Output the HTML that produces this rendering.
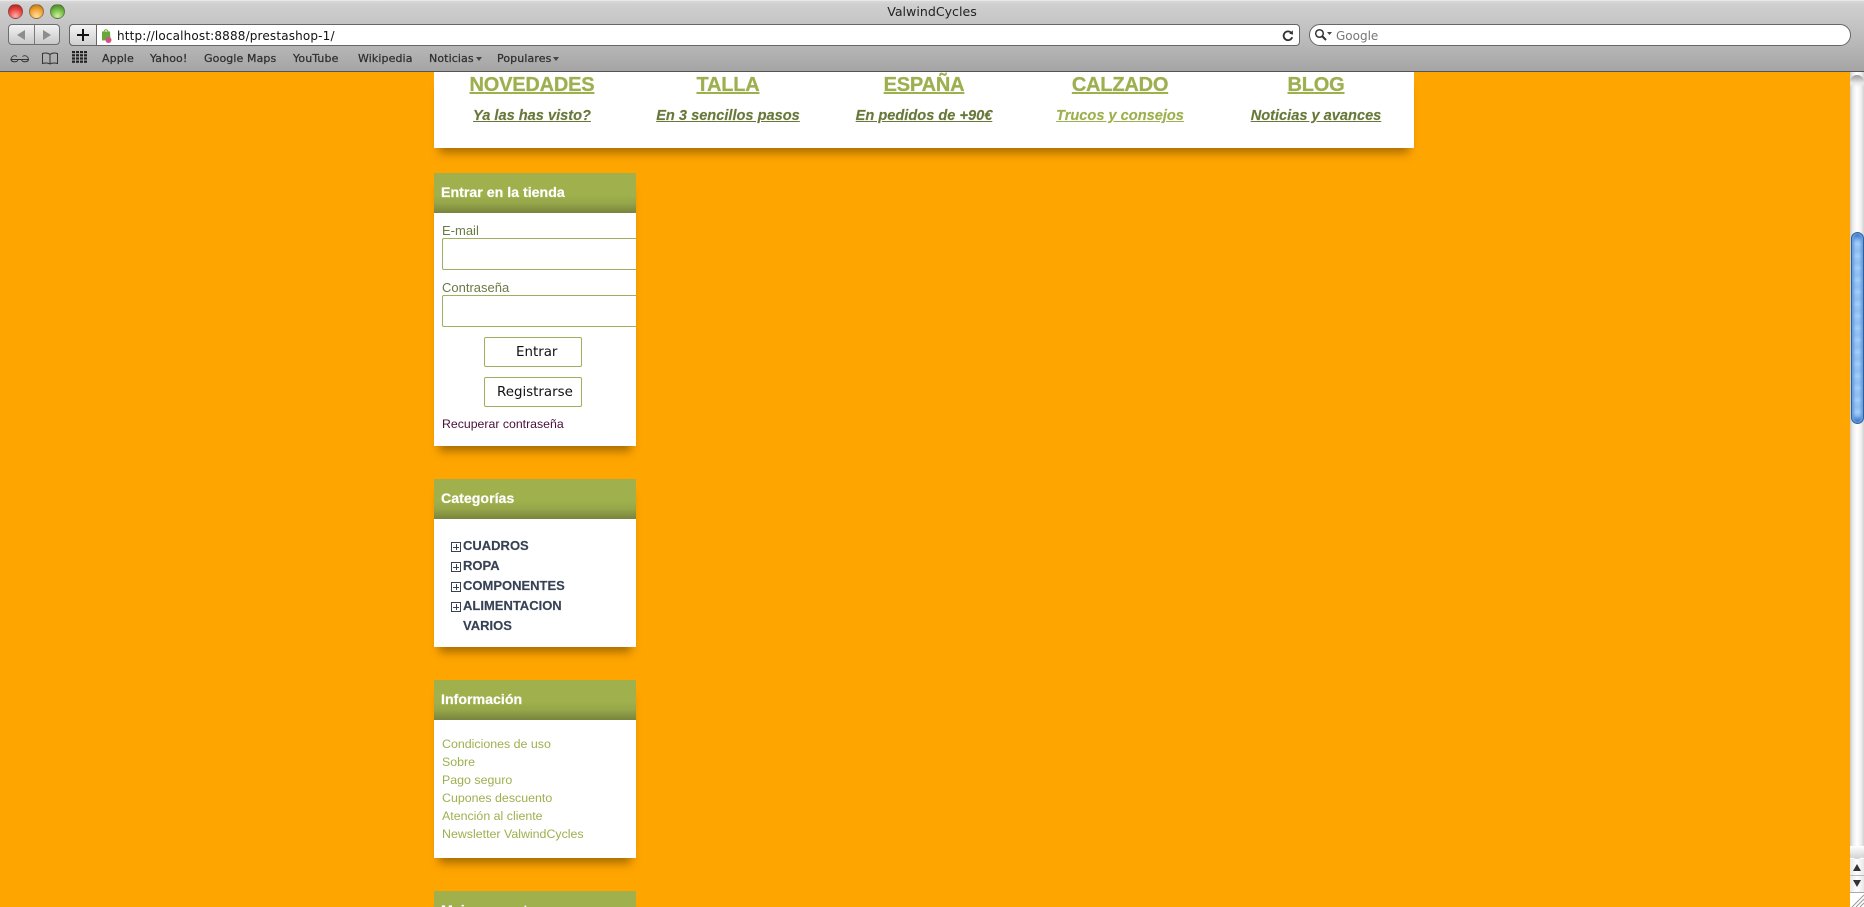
<!DOCTYPE html>
<html lang="es">
<head>
<meta charset="utf-8">
<title>ValwindCycles</title>
<style>
html,body{margin:0;padding:0;width:1864px;height:907px;overflow:hidden;background:#ffa500;font-family:"Liberation Sans",sans-serif}
*{box-sizing:border-box}
#page{position:absolute;left:0;top:0;width:1864px;height:907px;overflow:hidden}
#page *{position:absolute}
#chrome{left:0;top:0;width:1864px;height:72px;background:linear-gradient(#d8d8d8 0,#cfcfcf 4px,#bdbdbd 36px,#a4a4a4 71px);border-bottom:1px solid #555;border-top:1px solid #e8e8e8;z-index:5}
.ui{font-family:"DejaVu Sans",sans-serif;white-space:nowrap}
.light{width:15px;height:15px;border-radius:50%;border:1px solid rgba(80,80,80,.55)}
.bm{top:51px;font-size:11px;line-height:14px;color:#2f2f2f;font-weight:400;-webkit-text-stroke:.25px #2f2f2f;letter-spacing:.1px}
.tri{width:0;height:0;border-left:3px solid transparent;border-right:3px solid transparent;border-top:4px solid #444}
#head{left:434px;top:72px;width:980px;height:76px;background:#fff;box-shadow:0 10px 9px -5px rgba(0,0,0,.34)}
.col{width:196px;text-align:center;white-space:nowrap;text-decoration:underline}
.t{top:1px;font-size:20px;font-weight:700;line-height:24px;color:#9db04f;letter-spacing:-.2px;-webkit-text-stroke:.3px #9db04f}
.s{top:34px;font-size:14.6px;font-weight:700;font-style:italic;line-height:20px;color:#67783a;-webkit-text-stroke:.15px currentColor}
.box{left:434px;width:202px;background:#fff;box-shadow:0 10px 9px -5px rgba(0,0,0,.36)}
.hd{left:0;top:0;width:202px;height:40px;background:linear-gradient(#9fb04d 0,#9fb04d 22px,#96a649 30px,#77843c 40px);color:#fff;font-size:14.2px;font-weight:700;line-height:20px;padding:0;-webkit-text-stroke:.2px #fff}
.hd span{left:7px;top:10px;white-space:nowrap}
.lab{left:8px;font-size:13px;line-height:16px;color:#6a7a45;white-space:nowrap}
.inp{left:8px;width:194px;height:32px;background:#fff;border:1px solid #a0ae60;border-right:0;border-radius:2px 0 0 2px}
.btn{left:50px;width:98px;height:30px;background:#fff;border:1px solid #a0ae60;border-radius:2px;font-family:"DejaVu Sans",sans-serif;font-size:13.400px;line-height:28px;color:#111;white-space:nowrap}
.cat{left:29px;font-size:13px;font-weight:700;line-height:16px;color:#374254;white-space:nowrap;-webkit-text-stroke:.15px #374254}
.plus{left:17px;width:10px;height:10px;border:1px solid #374254;background:
 linear-gradient(#374254,#374254) center/6px 1px no-repeat,
 linear-gradient(#374254,#374254) center/1px 6px no-repeat,#fff}
.lnk{left:8px;font-size:12.4px;line-height:16px;color:#9db04f;white-space:nowrap}
#sb{left:1850px;top:72px;width:14px;height:835px;background:#fff;z-index:4}
</style>
</head>
<body>
<div id="page">

<div id="head">
  <a class="col t" style="left:0">NOVEDADES</a><a class="col s" style="left:0">Ya las has visto?</a>
  <a class="col t" style="left:196px">TALLA</a><a class="col s" style="left:196px">En 3 sencillos pasos</a>
  <a class="col t" style="left:392px">ESPAÑA</a><a class="col s" style="left:392px">En pedidos de +90€</a>
  <a class="col t" style="left:588px">CALZADO</a><a class="col s" style="left:588px;color:#9db04f">Trucos y consejos</a>
  <a class="col t" style="left:784px">BLOG</a><a class="col s" style="left:784px">Noticias y avances</a>
</div>

<div class="box" style="top:173px;height:273px">
  <div class="hd"><span>Entrar en la tienda</span></div>
  <div class="lab" style="top:50px">E-mail</div>
  <div class="inp" style="top:65px"></div>
  <div class="lab" style="top:107px">Contraseña</div>
  <div class="inp" style="top:122px"></div>
  <div class="btn" style="top:164px"><span style="left:31px;top:1px">Entrar</span></div>
  <div class="btn" style="top:204px"><span style="left:12px;top:1px">Registrarse</span></div>
  <div class="lab" style="top:243px;color:#4a0f3a;font-size:12.300px">Recuperar contraseña</div>
</div>

<div class="box" style="top:479px;height:168px">
  <div class="hd"><span>Categorías</span></div>
  <div class="plus" style="top:63px"></div><div class="cat" style="top:59px">CUADROS</div>
  <div class="plus" style="top:83px"></div><div class="cat" style="top:79px">ROPA</div>
  <div class="plus" style="top:103px"></div><div class="cat" style="top:99px">COMPONENTES</div>
  <div class="plus" style="top:123px"></div><div class="cat" style="top:119px">ALIMENTACION</div>
  <div class="cat" style="top:139px">VARIOS</div>
</div>

<div class="box" style="top:680px;height:178px">
  <div class="hd"><span>Información</span></div>
  <div class="lnk" style="top:56px">Condiciones de uso</div>
  <div class="lnk" style="top:74px">Sobre</div>
  <div class="lnk" style="top:92px">Pago seguro</div>
  <div class="lnk" style="top:110px">Cupones descuento</div>
  <div class="lnk" style="top:128px">Atención al cliente</div>
  <div class="lnk" style="top:146px">Newsletter ValwindCycles</div>
</div>

<div class="box" style="top:891px;height:16px;overflow:hidden">
  <div class="hd"><span>Mejores ventas</span></div>
</div>

<div id="chrome">
  <div class="ui" style="left:0;width:1864px;top:3px;text-align:center;font-size:12.600px;line-height:16px;color:#222">ValwindCycles</div>

  <div class="light" style="left:8px;top:3px;background:radial-gradient(circle at 50% 85%,#ffb0a8 0,#e8433e 55%,#a81818 100%)"></div>
  <div class="light" style="left:29px;top:3px;background:radial-gradient(circle at 50% 85%,#ffe0a0 0,#f0a030 55%,#b06c10 100%)"></div>
  <div class="light" style="left:50px;top:3px;background:radial-gradient(circle at 50% 85%,#d0f0a0 0,#70b840 55%,#3c7a1c 100%)"></div>

  <div style="left:8px;top:23px;width:52px;height:21px;border:1px solid #6e6e6e;border-radius:4px;background:linear-gradient(#f2f2f2,#c8c8c8)"></div>
  <div style="left:34px;top:24px;width:1px;height:19px;background:#7a7a7a"></div>
  <div style="left:17px;top:29px;width:0;height:0;border-top:5px solid transparent;border-bottom:5px solid transparent;border-right:8px solid #8d8d8d"></div>
  <div style="left:43px;top:29px;width:0;height:0;border-top:5px solid transparent;border-bottom:5px solid transparent;border-left:8px solid #8d8d8d"></div>

  <div style="left:69px;top:23px;width:1231px;height:22px;border:1px solid #666;border-radius:4px;background:#fff"></div>
  <div style="left:69px;top:23px;width:28px;height:22px;border:1px solid #666;border-radius:4px 0 0 4px;background:linear-gradient(#f4f4f4,#cfcfcf)"></div>
  <div style="left:77px;top:33px;width:12px;height:2px;background:#111"></div>
  <div style="left:82px;top:28px;width:2px;height:12px;background:#111"></div>

  <svg style="left:101px;top:27px" width="12" height="17" viewBox="0 0 12 17">
    <path d="M1 3.500 L9 3.500 L9.500 12 L1 12.500 Z" fill="#66a83a"/>
    <path d="M3 4 C3 1 7 1 7 4" fill="none" stroke="#66a83a" stroke-width="1"/>
    <circle cx="7.500" cy="12" r="3" fill="#d84d88"/>
  </svg>
  <div class="ui" style="left:117px;top:27px;font-size:12px;line-height:16px;color:#111;letter-spacing:.16px">http://localhost:8888/prestashop-1/</div>

  <svg style="left:1281px;top:27px" width="14" height="16" viewBox="0 0 14 16">
    <path d="M10.600 5.200 A4.400 4.400 0 1 0 11.200 9.200" fill="none" stroke="#333" stroke-width="1.800"/>
    <path d="M8.200 5.600 L12 6.600 L11.800 2.400 Z" fill="#333"/>
  </svg>

  <div style="left:1309px;top:23px;width:542px;height:22px;border:1px solid #666;border-radius:11px;background:#fff"></div>
  <svg style="left:1314px;top:27px" width="20" height="14" viewBox="0 0 20 14">
    <circle cx="5.500" cy="5.500" r="3.800" fill="none" stroke="#333" stroke-width="1.500"/>
    <path d="M8.500 8.500 L12 12" stroke="#333" stroke-width="2"/>
    <path d="M13 4 L18 4 L15.500 7 Z" fill="#444"/>
  </svg>
  <div class="ui" style="left:1336px;top:27px;font-size:12px;line-height:16px;color:#777">Google</div>

  <svg style="left:10px;top:52px" width="20" height="12" viewBox="0 0 20 12">
    <path d="M1 6.500 H8 C8 9.500 1.500 9.500 1 6.500 Z M11.500 6.500 H18.500 C18 9.500 11.500 9.500 11.500 6.500 Z M8 6.500 H11.500" fill="none" stroke="#333"/>
    <path d="M1 6 C2 2.500 5 2 7 3.500 M18.500 6 C17.500 2.500 14.500 2 12.500 3.500" fill="none" stroke="#333" stroke-width=".9"/>
  </svg>
  <svg style="left:41px;top:51px" width="18" height="13" viewBox="0 0 18 13">
    <path d="M9 2.500 C7 .8 4 .8 1.500 1.500 V11.500 C4 10.800 7 10.800 9 12 C11 10.800 14 10.800 16.500 11.500 V1.500 C14 .8 11 .8 9 2.500 Z M9 2.500 V12" fill="none" stroke="#333"/>
  </svg>
  <svg style="left:72px;top:50px" width="15" height="12" viewBox="0 0 15 12" fill="#222">
    <rect x="0" y="0" width="3" height="2.200"/><rect x="4" y="0" width="3" height="2.200"/><rect x="8" y="0" width="3" height="2.200"/><rect x="12" y="0" width="3" height="2.200"/>
    <rect x="0" y="3.200" width="3" height="2.200"/><rect x="4" y="3.200" width="3" height="2.200"/><rect x="8" y="3.200" width="3" height="2.200"/><rect x="12" y="3.200" width="3" height="2.200"/>
    <rect x="0" y="6.400" width="3" height="2.200"/><rect x="4" y="6.400" width="3" height="2.200"/><rect x="8" y="6.400" width="3" height="2.200"/><rect x="12" y="6.400" width="3" height="2.200"/>
    <rect x="0" y="9.600" width="3" height="2.200"/><rect x="4" y="9.600" width="3" height="2.200"/><rect x="8" y="9.600" width="3" height="2.200"/><rect x="12" y="9.600" width="3" height="2.200"/>
  </svg>

  <div class="ui bm" style="left:102px">Apple</div>
  <div class="ui bm" style="left:150px">Yahoo!</div>
  <div class="ui bm" style="left:204px">Google Maps</div>
  <div class="ui bm" style="left:293px">YouTube</div>
  <div class="ui bm" style="left:358px">Wikipedia</div>
  <div class="ui bm" style="left:429px">Noticias</div>
  <div class="tri" style="left:476px;top:56px"></div>
  <div class="ui bm" style="left:497px">Populares</div>
  <div class="tri" style="left:553px;top:56px"></div>
</div>

<div id="sb">
  <div style="left:0;top:0;width:14px;height:786px;background:linear-gradient(90deg,#c9c9c9 0,#ededed 3px,#fff 7px,#f0f0f0 11px,#d2d2d2 14px)"></div>
  <div style="left:0;top:3px;width:14px;height:12px;border-radius:7px 7px 0 0;background:linear-gradient(#9a9a9a,#e8e8e8 8px,rgba(255,255,255,0))"></div>
  <div style="left:1px;top:160px;width:13px;height:192px;border:1px solid #2f5f9e;border-radius:7px;background:repeating-linear-gradient(#9cc8f4 0,#8dbdf0 6px,#a8d0f6 12px);box-shadow:inset 2px 0 2px #6aa2e2,inset -2px 0 2px #6aa2e2,inset 0 6px 5px -2px #2e6cc0,inset 0 -6px 5px -2px #2e6cc0"></div>
  <div style="left:0;top:774px;width:14px;height:13px;border-radius:0 0 7px 7px;background:linear-gradient(#fff,#d0d0d0)"></div>
  <div style="left:0;top:787px;width:14px;height:33px;background:linear-gradient(90deg,#e8e8e8,#fff 50%,#e8e8e8)"></div>
  <div style="left:3px;top:792px;width:0;height:0;border-left:4px solid transparent;border-right:4px solid transparent;border-bottom:7px solid #333"></div>
  <div style="left:0;top:803px;width:14px;height:1px;background:#bbb"></div>
  <div style="left:3px;top:808px;width:0;height:0;border-left:4px solid transparent;border-right:4px solid transparent;border-top:7px solid #333"></div>
  <div style="left:0;top:820px;width:14px;height:15px;background:#fff;border-top:1px solid #aaa"></div>
  <svg style="left:0;top:821px" width="14" height="14" viewBox="0 0 14 14">
    <path d="M2 14 L14 2 M6 14 L14 6 M10 14 L14 10" stroke="#9a9a9a" stroke-width="1"/>
  </svg>
</div>

</div>
</body>
</html>
